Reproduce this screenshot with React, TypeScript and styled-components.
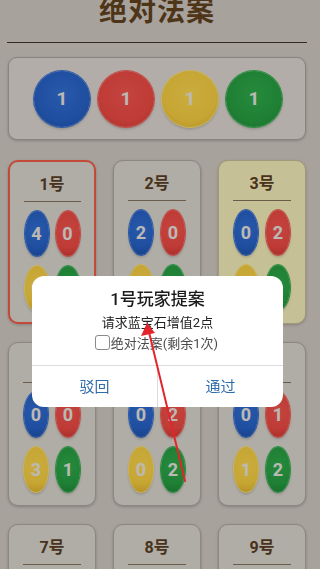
import React from 'react';
import styled, { createGlobalStyle, css } from 'styled-components';

const GlobalStyle = createGlobalStyle`
  html, body {
    margin: 0;
    padding: 0;
    height: 100%;
    overflow: hidden;
    background: #d2cbc4;
    font-family: Roboto, "Noto Sans CJK SC", sans-serif;
  }
`;

const gemColors: Record<string, { base: string; light: string; dark: string; rim: string }> = {
  blue: { base: '#2762c8', light: '#3470d6', dark: '#1c4fa8', rim: '#3a74d8' },
  red: { base: '#ef4a44', light: '#f5564f', dark: '#cf3832', rim: '#f7625b' },
  yellow: { base: '#f8cf40', light: '#fcd84e', dark: '#e0b02a', rim: '#ffe262' },
  green: { base: '#27a042', light: '#2fad4b', dark: '#1e8735', rim: '#36b552' },
};

const gemOrder = ['blue', 'red', 'yellow', 'green'];

const players = [
  { name: '1号', gems: [4, 0, 0, 0], state: 'active' },
  { name: '2号', gems: [2, 0, 1, 0], state: 'normal' },
  { name: '3号', gems: [0, 2, 0, 1], state: 'marked' },
  { name: '4号', gems: [0, 0, 3, 1], state: 'normal' },
  { name: '5号', gems: [0, 2, 0, 2], state: 'normal' },
  { name: '6号', gems: [0, 1, 1, 2], state: 'normal' },
  { name: '7号', gems: [0, 0, 0, 0], state: 'normal' },
  { name: '8号', gems: [0, 0, 0, 0], state: 'normal' },
  { name: '9号', gems: [0, 0, 0, 0], state: 'normal' },
];

const Page = styled.div`
  width: 300px;
  margin-left: 7px;
`;

const Header = styled.div`
  margin-top: -2px;
  padding-bottom: 16px;
  border-bottom: 1.5px solid #42352a;
  text-align: center;
`;

const Title = styled.h1`
  margin: 0;
  font-size: 28px;
  line-height: 28px;
  font-weight: 700;
  color: #62431e;
  letter-spacing: 1px;
`;

const PoolPanel = styled.div`
  margin: 14px 1px 0 1px;
  height: 83px;
  box-sizing: border-box;
  border: 1.5px solid #aca59d;
  border-radius: 9px;
  background: #dfd9d2;
  box-shadow: 0 1px 3px rgba(0, 0, 0, 0.2);
  display: flex;
  align-items: center;
  justify-content: center;
  gap: 8px;
  padding-left: 2px;
`;

const gemFill = (c: string) => {
  const g = gemColors[c];
  return css`
    background: radial-gradient(circle at 50% 42%, ${g.light} 0%, ${g.base} 62%, ${g.dark} 100%);
    box-shadow: 0 0 0 1px ${g.rim}, 0 2px 3px rgba(0, 0, 0, 0.22);
  `;
};

const Ball = styled.div<{ $color: string }>`
  width: 56px;
  height: 56px;
  border-radius: 50%;
  ${(p) => gemFill(p.$color)}
  display: flex;
  align-items: center;
  justify-content: center;
  color: #ece8e2;
  font-family: Roboto, sans-serif;
  font-weight: 700;
  font-size: 19px;
`;

const Grid = styled.div`
  margin-top: 20px;
  display: grid;
  grid-template-columns: repeat(3, 88px);
  column-gap: 17px;
  row-gap: 18px;
  padding-left: 1px;
`;

const Card = styled.div<{ $state: string }>`
  box-sizing: border-box;
  height: 164px;
  padding: 13px 14px 0;
  border-radius: 10px;
  border: 1.5px solid #b0a9a1;
  background: #dcd7d0;
  box-shadow: 0 1px 3px rgba(0, 0, 0, 0.22);
  ${(p) =>
    p.$state === 'active' &&
    css`
      border: 2px solid #f45c46;
      padding: 12.5px 13.5px 0;
    `}
  ${(p) =>
    p.$state === 'marked' &&
    css`
      background: #f8f0bd;
      border-color: #c9c196;
    `}
`;

const CardName = styled.div`
  height: 20px;
  line-height: 20px;
  padding-bottom: 6px;
  border-bottom: 1.5px solid #86725e;
  text-align: center;
  font-size: 16px;
  font-weight: 700;
  color: #5a3f24;
`;

const GemGrid = styled.div`
  margin-top: 9px;
  display: grid;
  grid-template-columns: 24px 24px;
  justify-content: space-between;
  padding: 0 1px;
  row-gap: 10px;
`;

const Oval = styled.div<{ $color: string }>`
  width: 24px;
  height: 45px;
  border-radius: 50%;
  ${(p) => gemFill(p.$color)}
  display: flex;
  align-items: center;
  justify-content: center;
  color: #ece8e2;
  font-family: Roboto, sans-serif;
  font-weight: 700;
  font-size: 18px;
`;

const Mask = styled.div`
  position: fixed;
  inset: 0;
  background: rgba(0, 0, 0, 0.2);
  padding: 276px 0 0 32px;
`;

const Dialog = styled.div`
  width: 251px;
  height: 131px;
  border-radius: 12px;
  background: #fff;
  display: flex;
  flex-direction: column;
  overflow: hidden;
`;

const DialogBody = styled.div`
  flex: 1;
  padding-top: 11px;
  display: flex;
  flex-direction: column;
  align-items: center;
  border-bottom: 1px solid #dcdcdc;
`;

const DialogTitle = styled.div`
  font-size: 17px;
  line-height: 24px;
  font-weight: 500;
  color: #1b1b1b;
`;

const DialogText = styled.div`
  margin-top: 3px;
  font-size: 13px;
  line-height: 18px;
  color: #222;
`;

const CheckRow = styled.label`
  display: flex;
  align-items: center;
  height: 20px;
  font-size: 13px;
  color: #4a4a4a;
  margin-right: 2px;
`;

const CheckBox = styled.span`
  width: 13px;
  height: 13px;
  border: 1.2px solid #8a8a8a;
  border-radius: 3px;
  background: #fff;
  margin-right: 1px;
`;

const ButtonRow = styled.div`
  height: 41px;
  display: flex;
`;

const DialogButton = styled.button`
  flex: 1;
  border: none;
  background: transparent;
  font-family: inherit;
  font-size: 15px;
  color: #2f6cab;
  padding: 0 0 2px;
  & + & {
    border-left: 1px solid #dcdcdc;
  }
`;

const Annotation = styled.svg`
  position: fixed;
  left: 0;
  top: 0;
  pointer-events: none;
`;

export default function App() {
  return (
    <>
      <GlobalStyle />
      <Page>
        <Header>
          <Title>绝对法案</Title>
        </Header>
        <PoolPanel>
          {gemOrder.map((c) => (
            <Ball key={c} $color={c}>1</Ball>
          ))}
        </PoolPanel>
        <Grid>
          {players.map((p) => (
            <Card key={p.name} $state={p.state}>
              <CardName>{p.name}</CardName>
              <GemGrid>
                {p.gems.map((n, i) => (
                  <Oval key={i} $color={gemOrder[i]}>{n}</Oval>
                ))}
              </GemGrid>
            </Card>
          ))}
        </Grid>
      </Page>
      <Mask>
        <Dialog>
          <DialogBody>
            <DialogTitle>1号玩家提案</DialogTitle>
            <DialogText>请求蓝宝石增值2点</DialogText>
            <CheckRow>
              <CheckBox />
              绝对法案(剩余1次)
            </CheckRow>
          </DialogBody>
          <ButtonRow>
            <DialogButton>驳回</DialogButton>
            <DialogButton>通过</DialogButton>
          </ButtonRow>
        </Dialog>
      </Mask>
      <Annotation width="320" height="569" viewBox="0 0 320 569">
        <line x1="185" y1="481" x2="148.5" y2="330" stroke="#e3252b" strokeWidth="2" strokeLinecap="round" />
        <polygon points="147,323 141,336 155,333" fill="#e3252b" />
      </Annotation>
    </>
  );
}
